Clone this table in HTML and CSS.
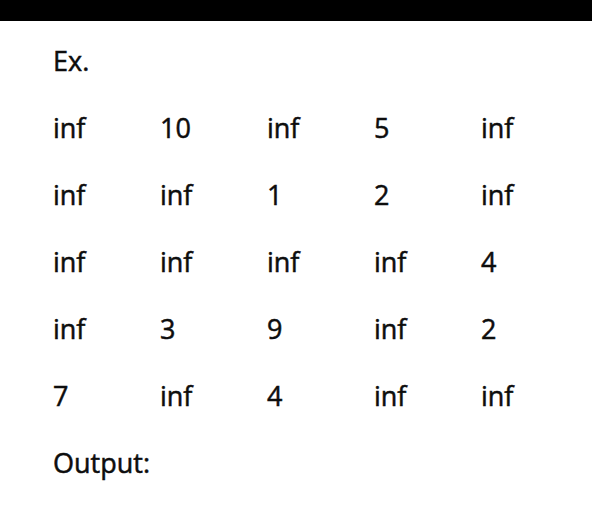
FILE: index.html
```html
<!DOCTYPE html>
<html>
<head>
<meta charset="utf-8">
<link rel="stylesheet" href="styles.css">
</head>
<body>
<div class="topbar"></div>
<main class="doc">
  <p class="line">Ex.</p>
  <div class="matrix">
    <span>inf</span><span>10</span><span>inf</span><span>5</span><span>inf</span>
    <span>inf</span><span>inf</span><span>1</span><span>2</span><span>inf</span>
    <span>inf</span><span>inf</span><span>inf</span><span>inf</span><span>4</span>
    <span>inf</span><span>3</span><span>9</span><span>inf</span><span>2</span>
    <span>7</span><span>inf</span><span>4</span><span>inf</span><span>inf</span>
  </div>
  <p class="line">Output:</p>
</main>
</body>
</html>
```
FILE: styles.css
```css
html, body {
  margin: 0;
  padding: 0;
  background: #ffffff;
}
body {
  width: 592px;
  height: 505px;
  overflow: hidden;
  font-family: "Open Sans", Lato, sans-serif;
  color: #0d0d0d;
}
.topbar {
  height: 21px;
  background: #000000;
}
.doc {
  padding: 6px 0 0 53px;
  font-size: 27px;
  line-height: 67px;
  -webkit-text-stroke: 0.5px #0d0d0d;
}
.line {
  margin: 0;
}
.matrix {
  display: grid;
  grid-template-columns: repeat(5, 107px);
}
```
